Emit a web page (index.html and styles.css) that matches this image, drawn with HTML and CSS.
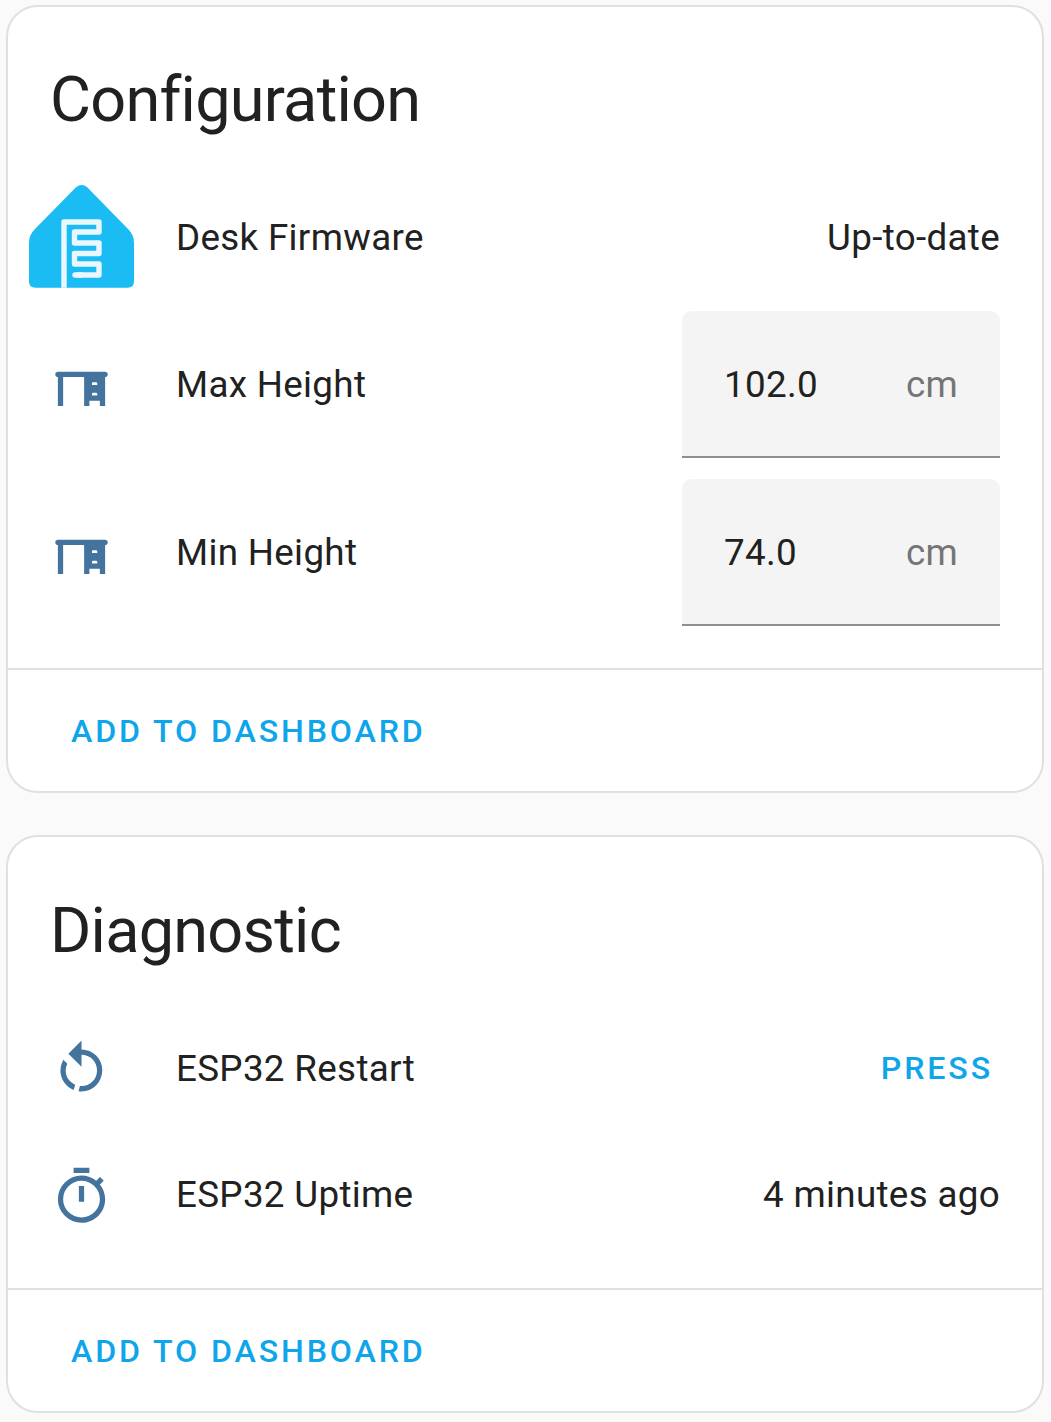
FILE: index.html
```html
<!DOCTYPE html>
<html lang="en">
<head>
<meta charset="utf-8">
<title>Desk</title>
<link rel="stylesheet" href="styles.css">
</head>
<body>
<main class="page">
  <section class="card">
    <h1 class="card-title">Configuration</h1>
    <div class="rows">
      <div class="row">
        <span class="icon-slot">
          <svg class="logo" viewBox="0 0 105 105">
            <path fill="#1bbcf3" d="M47 2.2Q52.7-2.2 58.2 2.2L99.5 44.5Q105 50 105 58V96.5Q105 102.7 98.5 102.7H6.5Q0 102.7 0 96.5V58Q0 50 5.5 44.5Z"/>
            <path fill="none" stroke="#eaf7fe" stroke-width="5.4" stroke-linejoin="round" d="M35 102.7V37H70V47H45.5V58H70V68.5H45.5V79H70V90H48"/>
            <path fill="none" stroke="#eaf7fe" stroke-width="5.4" stroke-linecap="round" d="M46 90H52"/>
          </svg>
        </span>
        <span class="name">Desk Firmware</span>
        <span class="value">Up-to-date</span>
      </div>
      <div class="row">
        <span class="icon-slot">
          <svg class="icon" viewBox="0 0 24 24"><path d="M3 6H21C21.55 6 22 6.45 22 7C22 7.55 21.55 8 21 8V19H19V17H15V19H13V8H5V19H3V8C2.45 8 2 7.55 2 7C2 6.45 2.45 6 3 6M16 10.5V11H18V10.5C18 10.22 17.78 10 17.5 10H16.5C16.22 10 16 10.22 16 10.5M16 14.5V15H18V14.5C18 14.22 17.78 14 17.5 14H16.5C16.22 14 16 14.22 16 14.5Z"/></svg>
        </span>
        <span class="name">Max Height</span>
        <label class="field"><span>102.0</span><span class="unit">cm</span></label>
      </div>
      <div class="row">
        <span class="icon-slot">
          <svg class="icon" viewBox="0 0 24 24"><path d="M3 6H21C21.55 6 22 6.45 22 7C22 7.55 21.55 8 21 8V19H19V17H15V19H13V8H5V19H3V8C2.45 8 2 7.55 2 7C2 6.45 2.45 6 3 6M16 10.5V11H18V10.5C18 10.22 17.78 10 17.5 10H16.5C16.22 10 16 10.22 16 10.5M16 14.5V15H18V14.5C18 14.22 17.78 14 17.5 14H16.5C16.22 14 16 14.22 16 14.5Z"/></svg>
        </span>
        <span class="name">Min Height</span>
        <label class="field"><span>74.0</span><span class="unit">cm</span></label>
      </div>
    </div>
    <footer class="actions"><button class="button">ADD TO DASHBOARD</button></footer>
  </section>

  <section class="card card-diagnostic">
    <h1 class="card-title">Diagnostic</h1>
    <div class="rows">
      <div class="row">
        <span class="icon-slot">
          <svg class="icon" viewBox="0 0 24 24"><path d="M12,4C14.1,4 16.1,4.8 17.6,6.3C20.7,9.4 20.7,14.5 17.6,17.6C15.8,19.5 13.3,20.2 10.9,19.9L11.4,17.9C13.1,18.1 14.9,17.5 16.2,16.2C18.5,13.9 18.5,10.1 16.2,7.7C15.1,6.6 13.5,6 12,6V10.6L7,5.6L12,0.6V4M6.3,17.6C3.7,15 3.3,11 5.1,7.9L6.6,9.4C5.5,11.6 5.9,14.4 7.8,16.2C8.3,16.7 8.9,17.1 9.6,17.4L9,19.4C8,19 7.1,18.4 6.3,17.6Z"/></svg>
        </span>
        <span class="name">ESP32 Restart</span>
        <button class="button press">PRESS</button>
      </div>
      <div class="row">
        <span class="icon-slot">
          <svg class="icon" viewBox="0 0 24 24"><path d="M12,20A7,7 0 0,1 5,13A7,7 0 0,1 12,6A7,7 0 0,1 19,13A7,7 0 0,1 12,20M19.03,7.39L20.45,5.97C20,5.46 19.55,5 19.04,4.56L17.62,6C16.07,4.74 14.12,4 12,4A9,9 0 0,0 3,13A9,9 0 0,0 12,22C17,22 21,17.97 21,13C21,10.88 20.26,8.93 19.03,7.39M11,14H13V8H11M15,1H9V3H15V1Z"/></svg>
        </span>
        <span class="name">ESP32 Uptime</span>
        <span class="value">4 minutes ago</span>
      </div>
    </div>
    <footer class="actions"><button class="button">ADD TO DASHBOARD</button></footer>
  </section>
</main>
</body>
</html>
```
FILE: styles.css
```css
* {
  box-sizing: border-box;
}

body {
  margin: 0;
  background: #fafafa;
  color: #212121;
  font-family: Roboto, "Liberation Sans", sans-serif;
  font-size: 36.75px;
  letter-spacing: 0.33px;
}

.page {
  display: flex;
  flex-direction: column;
  gap: 42px;
  height: 1422px;
  padding: 5px 7px 0 6px;
}

.card {
  display: flex;
  flex-direction: column;
  height: 788px;
  background: #fff;
  border: 2px solid #e0e0e0;
  border-radius: 32px;
}

.card-diagnostic {
  height: 578px;
}

.card-title {
  margin: 0;
  height: 178px;
  padding: 30px 42px 0;
  font-size: 63px;
  font-weight: 400;
  line-height: 126px;
  letter-spacing: -0.756px;
}

.card-diagnostic .card-title {
  height: 179px;
  padding-top: 31px;
}

.rows {
  display: flex;
  flex: 1;
  flex-direction: column;
  gap: 21px;
  padding: 0 42px 0 21px;
}

.row {
  display: flex;
  align-items: center;
  min-height: 105px;
}

.icon-slot {
  display: flex;
  justify-content: center;
  flex: none;
  width: 105px;
}

.logo {
  width: 105px;
  height: 105px;
}

.icon {
  width: 63px;
  height: 63px;
  margin-top: 5px;
  fill: #44739e;
}

.card-diagnostic .icon {
  margin-top: 4px;
}

.name {
  flex: 1;
  padding-left: 42px;
}

.field {
  display: flex;
  align-items: center;
  justify-content: space-between;
  width: 318px;
  height: 147px;
  padding: 2px 42px 0;
  background: #f4f4f4;
  border-bottom: 2px solid #8e8e8e;
  border-radius: 10px 10px 0 0;
}

.unit {
  color: #757575;
}

.actions {
  display: flex;
  align-items: center;
  height: 123px;
  padding: 0 63px;
  border-top: 2px solid #e0e0e0;
}

.button {
  padding: 0;
  border: 0;
  background: none;
  color: #0fa5ea;
  font: 500 32.16px Roboto, "Liberation Sans", sans-serif;
  letter-spacing: 2.87px;
}

.press {
  padding: 0 7px 2px 0;
}
```
